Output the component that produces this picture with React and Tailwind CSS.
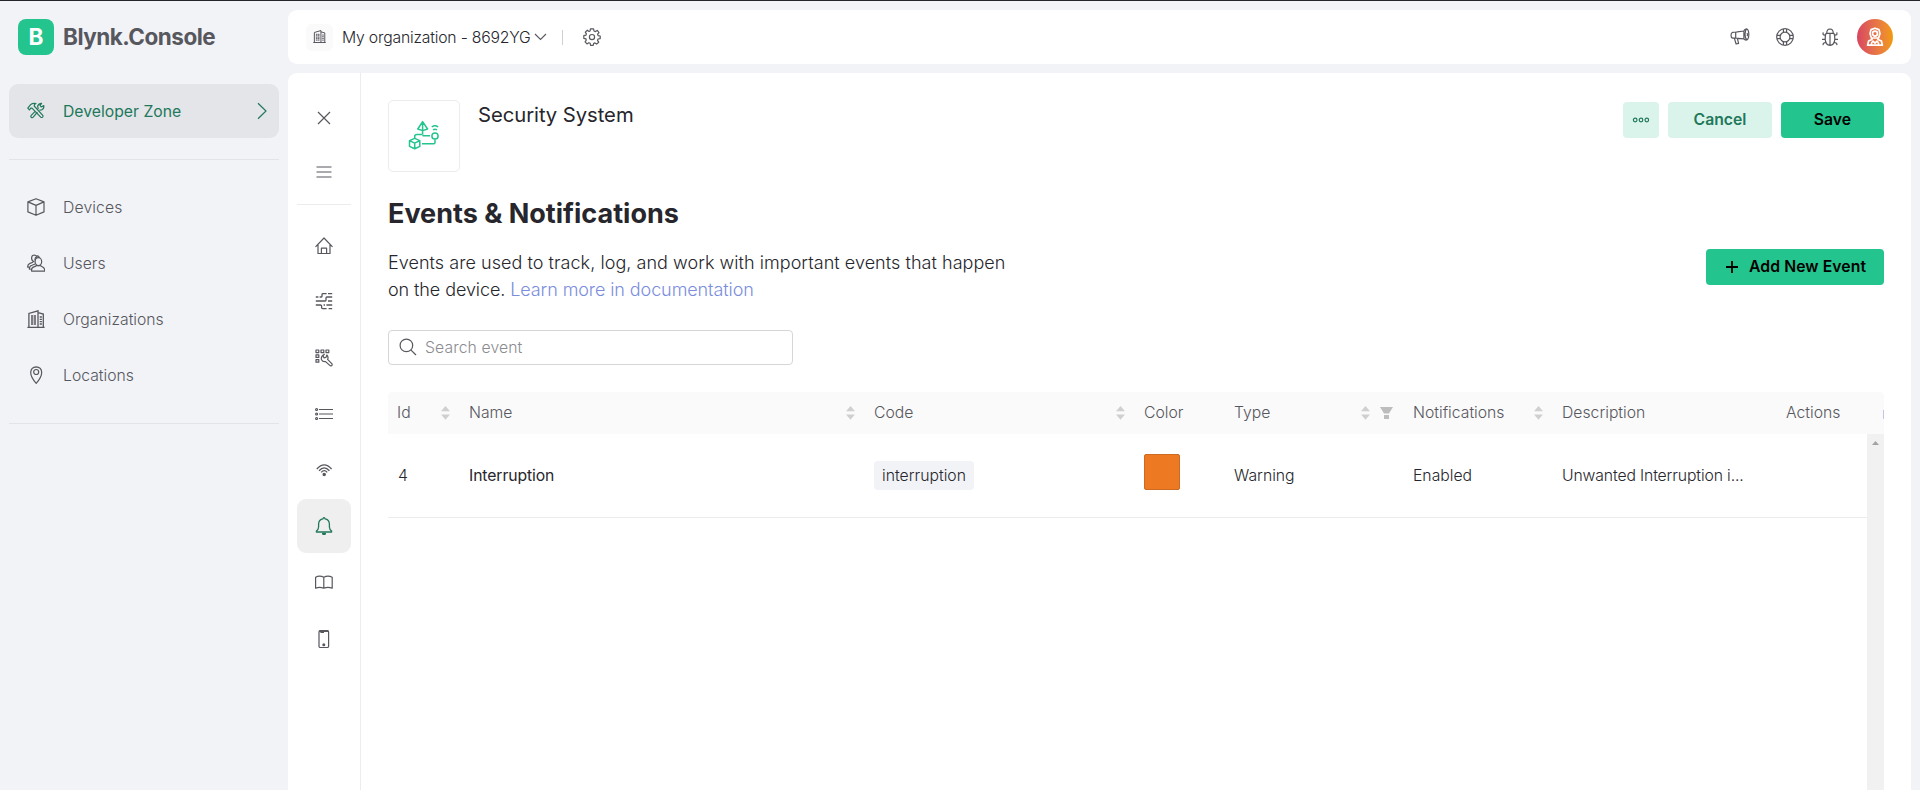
import React from "react";

function Svg({ size = 18, className = "", sw = 1.2, children }) {
  return (
    <svg
      width={size}
      height={size}
      viewBox={`0 0 ${size} ${size}`}
      fill="none"
      stroke="currentColor"
      strokeWidth={sw}
      strokeLinejoin="round"
      className={`shrink-0 ${className}`}
    >
      {children}
    </svg>
  );
}

const Tools = () => (
  <Svg>
    <path d="M.8 6.2 3.6 2.6Q5.6.9 9 1.5 7 2.3 7.2 4L15.8 13.3Q16.4 14.3 15.6 15.1 14.6 15.9 13.7 15.1L5 6.2 4 6 2.4 7.8Z" />
    <path d="M11.3 7 10.6 4.2Q11.3 1.6 14.6 1.3L13 3.4 14.2 5 16.8 3.6Q17.2 6.6 14.8 7.8L12.4 8.2M10.4 10.2 6.2 15.2Q5.2 16.2 4.2 15.3 3.3 14.3 4.2 13.4L8.2 9.4" />
  </Svg>
);
const Cube = () => (
  <Svg>
    <path d="M9 .8 17 3.9V13.9L9 17.3 .9 13.9V3.9ZM.9 3.9 9 7.4 17 3.9M9 7.4V17.3" />
  </Svg>
);
const People = () => (
  <Svg>
    <path d="M4.6 17.2Q3.9 13.4 7.6 12.6L9.5 11.6H13.2L16.4 13.6Q18 14.8 17.6 17.2Z" />
    <ellipse cx="11.4" cy="7.6" rx="3.3" ry="4" />
    <path d="M8.1 6.4Q7.4 3.6 10 2.9M9.8 2.8Q9.2 1.1 7.2 1 4.4 1.3 4.6 4.4 4.9 7.4 7.4 8M12.6 3.7Q11.4 1.4 9.6 2M3.8 15.2H2.4Q2 12.2 5 11.2L8.2 10M2 13.2H.7Q.4 10.4 3 9.4L6 8.2" />
  </Svg>
);
const Building = ({ size = 18 }) => (
  <svg width={size} height={size} viewBox="0 0 18 18" fill="none" stroke="currentColor" strokeWidth="1.3" className="shrink-0">
    <path d="M.4 17.3H17.6M1.9 17V3.4L11 .8V17M11 2.6 16.3 4V17" />
    <path d="M4 6H9.4M4 8H9.4M4 10H9.4M4 12H9.4M4 14H9.4M12.7 7H15M12.7 9.3H15M12.7 11.6H15M12.7 14H15" strokeDasharray="2.2 .6" />
  </svg>
);
const Pin = () => (
  <Svg>
    <path d="M9.2 17.3Q3.7 11 3.7 6.4 4 1 9.2.8 14.5 1 14.7 6.4 14.7 11 9.2 17.3Z" />
    <circle cx="9.2" cy="6" r="2.5" />
  </Svg>
);
const Gear = () => (
  <Svg>
    <path d="M7.4.8H10.6L11 3 12.4 3.6 14.3 2.4 16 4.6 14.6 6.2 15.1 7.6 17.2 8V10.6L15 11 14.5 12.4 15.7 14.2 13.6 16.1 11.9 14.9 10.7 15.3 10.2 17.3H7.6L7.1 15.2 5.8 14.7 4 15.9 2.1 13.8 3.3 12.1 2.9 10.8.8 10.3V7.7L2.9 7.2 3.4 5.9 2.3 4.1 4.3 2.2 6 3.4 7.1 3Z" />
    <circle cx="9" cy="9.1" r="2.6" />
  </Svg>
);
const Megaphone = () => (
  <Svg size={20}>
    <path d="M7.2 4.9 13.9 4V12L7.2 11.3M5.7 5 2.6 5.4Q1 5.8 1 8.3T2.6 11.2H5.7ZM5.7 5.1 13.8 4Q14.6 2 16.6 1.9 18.8 2.6 18.8 7.3T16.8 13Q14.6 13.2 13.8 11.8L5.7 11.2M16.4 2Q15 4 15 7.5T16.8 13M4.4 11.4 6.1 17 8.6 16.4 7.4 11.6" />
    <path d="M17 6Q18.2 7.6 17 9.2" />
  </Svg>
);
const Buoy = () => (
  <Svg>
    <circle cx="9" cy="9" r="8.3" />
    <circle cx="9" cy="9" r="4.9" />
    <path d="M7.4.9V4.3M10.6.9V4.3M7.4 13.7V17.1M10.6 13.7V17.1M.9 7.4H4.3M.9 10.6H4.3M13.7 7.4H17.1M13.7 10.6H17.1" />
  </Svg>
);
const Bug = () => (
  <Svg>
    <path d="M5.8 5Q5.7 1.1 9 1 12.3 1.1 12.2 5M5 5.4H13Q13.8 7 13.8 11.4 13.4 17 9 17.3 4.6 17 4.2 11.4 4.2 7 5 5.4ZM9 5.4V17M4.6 7.4 2.2 6.6 2 4.4M13.4 7.4 15.8 6.6 16 4.4M4.2 11.3H1M13.8 11.3H17M4.8 14.4 2.4 15.2 2 17.2M13.2 14.4 15.6 15.2 16 17.2" />
  </Svg>
);
const Avatar = () => (
  <Svg size={20} className="text-white" sw={1.7}>
    <path d="M6 2.6 10 1.2 14 2.6 15 6.6 13.6 11H6.4L5 6.6Z" />
    <circle cx="10" cy="6.6" r="2.5" />
    <path d="M7 11V12.4L3.6 14 2.6 18.2H17.4L16.4 14 13 12.4V11M6.2 18Q6.4 15 8 14.2L10 16.2 12 14.2Q13.6 15 13.8 18" />
  </Svg>
);
const Template = () => (
  <svg width="32" height="32" viewBox="0 0 32 32" fill="none" stroke="#24c48e" strokeWidth="1.5" strokeLinejoin="round">
    <path d="M14.6 1.6 9.8 9 14.6 10.6 19.6 9ZM14.6 1.6V14.5M6.7 18V16.4Q6.7 14.4 9 14.4H14M15 14.8V15.7H22M14 23.7H25.8Q27 23.7 27 22.4V19.6" />
    <circle cx="27" cy="16" r="3.1" />
    <path d="M25 9.8Q27 8.8 29 9.8M23.8 7Q27 4.4 30.2 7" />
    <path d="M6.7 18.4 11.8 20.6V26.4L6.7 28.7 1.5 26.4V20.6ZM1.5 20.6 6.7 23.2 11.8 20.6M6.7 23.2V28.7" />
  </svg>
);
const Home = () => (
  <Svg>
    <path d="M.5 9.8 9 1 17.5 9.8M3 7.6V16.5H15V7.6M6.4 16.5V11.2H11.6V16.5" />
  </Svg>
);
const Streams = () => (
  <Svg sw={1.3} className="-mt-[2px]">
    <path d="M.8 5H3.4M4.6 5H6.4Q7 5 7 4.2V2.4Q7 1.6 8 1.6H11.6M13 1.6H17.2M.8 9H10.2Q11 9 11 8V6Q11 5 12 5H17.2M13 9H17.2M.8 13H5.4Q6.6 13 6.6 14V15.8Q6.6 16.6 7.6 16.6H11.6M8.6 13H10M11.4 13H17.2M13.6 16.6H17.2" />
  </Svg>
);
const Keys = () => (
  <Svg>
    <rect x="1" y="1" width="2.8" height="2.6" />
    <rect x="6" y="1" width="2.8" height="2.6" />
    <rect x="11" y="1" width="2.8" height="2.6" />
    <rect x="1" y="5.8" width="2.8" height="2.6" />
    <rect x="1" y="10.6" width="2.8" height="2.6" />
    <path d="M9.4 5.2 8 6.8 9 8.8 11 8.4 11.8 6Q13.8 8.2 12.6 10.4L17 14.8Q17.4 16 16.6 16.8 15.4 17.2 14.8 16.4L10.6 12.6Q7.6 13 6.4 10.4 5.8 7 9.4 5.2Z" />
  </Svg>
);
const List = () => (
  <Svg>
    <path d="M4 4.5H18M4 9H18M4 13.5H18" />
    <circle cx="1.6" cy="4.5" r="1" />
    <circle cx="1.6" cy="9" r="1" />
    <circle cx="1.6" cy="13.5" r="1" />
  </Svg>
);
const Wifi = () => (
  <Svg sw={1.3}>
    <path d="M1.8 8Q9.2-.4 16.6 8M4 9.8Q9.2 3.8 14.4 9.8M6.2 11.4Q9.2 8 12.2 11.4" />
    <circle cx="9.2" cy="13.4" r="1.1" fill="currentColor" />
  </Svg>
);
const Bell = () => (
  <Svg sw={1.3}>
    <path d="M1.4 15V14Q3.5 12.6 3.6 10V7Q3.8 2.4 8 1.8 8.2.8 9 .7T10 1.8Q14.2 2.4 14.4 7V10Q14.5 12.6 16.6 14V15Z" />
    <path d="M7.6 16.4Q7.8 17.6 9 17.6T10.4 16.4Z" fill="currentColor" />
  </Svg>
);
const Book = () => (
  <Svg>
    <path d="M.6 4.2Q4.6 2 8.8 4.2 13 2 17.2 4.2V15.2Q13 13.6 8.8 15.2 4.6 13.6.6 15.2ZM8.8 4.2V15.2" />
  </Svg>
);
const Phone = () => (
  <Svg className="mt-[2px]">
    <rect x="4" y=".7" width="9.6" height="16.8" rx="1.2" />
    <path d="M5.4 2.5H9M4 1.4H13.6" />
    <circle cx="8.8" cy="14.8" r=".9" fill="currentColor" />
  </Svg>
);

function Sorter() {
  return (
    <svg width="9" height="14" viewBox="0 0 9 14" fill="#d0d0d0" className="shrink-0">
      <path d="M0 5.2 4.5 0 9 5.2ZM0 8.6H9L4.5 13.8Z" />
    </svg>
  );
}

const NAV = [
  [Cube, "Devices", "pt-[2px] tracking-[0.12px]"],
  [People, "Users", "pt-[2px]"],
  [Building, "Organizations", "pt-[2px]"],
  [Pin, "Locations", "pt-[2px]"],
];

function Sidebar() {
  return (
    <aside className="flex w-[288px] shrink-0 flex-col pr-[9px] pl-[9px]">
      <div className="mt-[18px] flex h-[36px] items-center gap-[9px] pl-[9px]">
        <div className="flex size-[36px] items-center justify-center rounded-[8px] bg-[#24c48e] text-[22.5px] font-bold text-white">B</div>
        <div className="text-[22.5px] font-bold tracking-[-0.5px] text-[#57575e]">Blynk.Console</div>
      </div>
      <div className="mt-[29px] flex h-[54px] items-center rounded-[9px] bg-[#e4e5e9] pr-[12px] pl-[18px] text-[#21785a]">
        <Tools />
        <span className="ml-[18px] flex-1 pt-[2px] font-normal">Developer Zone</span>
        <svg width="10" height="18" viewBox="0 0 10 18" fill="none" stroke="currentColor" strokeWidth="1.2">
          <path d="M1 1.2 9 9 1 16.8" />
        </svg>
      </div>
      <div className="mt-[21px] h-px bg-[#e3e4e8]" />
      <nav className="mt-[20px] flex flex-col gap-[2px] text-[#57575e]">
        {NAV.map(([Icon, label, style]) => (
          <div key={label} className="flex h-[54px] items-center gap-[18px] pl-[18px]">
            <Icon />
            <span className={style}>{label}</span>
          </div>
        ))}
      </nav>
      <div className="mt-[21px] h-px bg-[#e3e4e8]" />
    </aside>
  );
}

function TopBar() {
  return (
    <header className="flex h-[54px] shrink-0 items-center rounded-[9px] bg-white pr-[18px] pl-[18px]">
      <div className="flex size-[27px] items-center justify-center rounded-[6px] bg-[#fafafa] pb-[2px] text-[#4c4c54]">
        <Building size={13} />
      </div>
      <span className="ml-[9px] w-[189px] pt-px tracking-[-0.2px] whitespace-nowrap text-[#26262c]">My organization - 8692YG</span>
      <svg width="13" height="8" viewBox="0 0 13 8" fill="none" stroke="#57575e" strokeWidth="1.1" className="ml-[3px]">
        <path d="M1 1 6.5 6.4 12 1" />
      </svg>
      <div className="ml-[15px] h-[15px] w-px bg-[#cfcfd4]" />
      <div className="ml-[20px] flex-1 text-[#57575e]">
        <Gear />
      </div>
      <div className="flex items-center text-[#57575e]">
        <Megaphone />
        <div className="ml-[26px]"><Buoy /></div>
        <div className="ml-[27px]"><Bug /></div>
        <div className="ml-[18px] flex size-[36px] items-center justify-center rounded-full bg-linear-to-r from-[#d8455f] to-[#f29a00]">
          <Avatar />
        </div>
      </div>
    </header>
  );
}

const RAIL = [Home, Streams, Keys, List, Wifi, Bell, Book, Phone];

function Rail() {
  return (
    <div className="flex w-[73px] shrink-0 flex-col items-center border-r border-[#ececee] pt-[18px] text-[#57575e]">
      <div className="flex h-[54px] items-center">
        <Svg><path d="M3 3 15 15M15 3 3 15" /></Svg>
      </div>
      <div className="flex h-[54px] items-center">
        <Svg><path d="M1.5 4H16.5M1.5 9H16.5M1.5 14H16.5" /></Svg>
      </div>
      <div className="mt-[5px] h-px w-[54px] bg-[#ececee]" />
      <div className="mt-[14px] flex flex-col gap-[2px]">
        {RAIL.map((Icon, i) => (
          <div
            key={i}
            className={
              i === 5
                ? "flex size-[54px] items-center justify-center rounded-[9px] bg-[#efefef] text-[#21785a]"
                : "flex size-[54px] items-center justify-center"
            }
          >
            <Icon />
          </div>
        ))}
      </div>
    </div>
  );
}

function EventsTable() {
  return (
    <div className="mt-[27px] flex min-h-0 flex-1 flex-col">
      <div className="grid h-[42px] shrink-0 grid-cols-[72px_405px_270px_90px_179px_149px_224px_107px] items-center overflow-hidden rounded-t-[4px] bg-[#fafafa] text-[#57575e] *:flex *:items-center *:pl-[9px]">
        <div className="justify-between pr-[10px]">Id<Sorter /></div>
        <div className="justify-between pr-[10px]">Name<Sorter /></div>
        <div className="justify-between pr-[10px]">Code<Sorter /></div>
        <div>Color</div>
        <div className="pr-[11px]">
          <span className="flex-1">Type</span>
          <Sorter />
          <svg width="13" height="12" viewBox="0 0 13 12" fill="#bdbdbd" className="ml-[10px]">
            <path d="M0 0H13L9 6.4H4ZM4 8H9V12H4Z" />
          </svg>
        </div>
        <div className="justify-between pr-[10px]">Notifications<Sorter /></div>
        <div>Description</div>
        <div className="justify-between">
          Actions<span className="mt-[3px] h-[9px] w-px bg-[#c5c3e6]" />
        </div>
      </div>
      <div className="flex min-h-0 flex-1">
        <div className="flex-1">
          <div className="grid h-[84px] grid-cols-[72px_405px_270px_90px_179px_149px_224px_90px] items-center border-b border-[#ececee] text-[#26262c] *:pl-[9px]">
            <div><span className="ml-px">4</span></div>
            <div className="font-normal tracking-[-0.1px]">Interruption</div>
            <div className="flex">
              <span className="flex h-[29px] w-[100px] items-center justify-center rounded-[4px] bg-[#f2f3f7]">interruption</span>
            </div>
            <div>
              <div className="-mt-[7px] size-[36px] rounded-[2px] border border-[#cb6a20] bg-[#ed7a22]" />
            </div>
            <div>Warning</div>
            <div>Enabled</div>
            <div className="tracking-[-0.13px]">Unwanted Interruption i...</div>
            <div />
          </div>
        </div>
        <div className="flex w-[17px] justify-center bg-[#f1f1f1] pt-[7px]">
          <svg width="7" height="4" viewBox="0 0 7 4" fill="#a3a3a3">
            <path d="M0 4 3.5 0 7 4Z" />
          </svg>
        </div>
      </div>
    </div>
  );
}

function Content() {
  return (
    <section className="flex min-w-0 flex-1 flex-col pr-[27px] pl-[27px]">
      <div className="mt-[27px] flex h-[72px] items-start">
        <div className="flex size-[72px] items-center justify-center rounded-[5px] border border-[#ececee]">
          <Template />
        </div>
        <h2 className="ml-[18px] flex-1 text-[20.25px] leading-[30px] font-normal tracking-[-0.05px] text-[#26262c]">Security System</h2>
        <div className="mt-[2px] flex gap-[9px] font-semibold">
          <button className="flex size-[36px] items-center justify-center rounded-[4px] bg-[#dbf4eb] text-[#21785a]">
            <svg width="18" height="6" viewBox="0 0 18 6" fill="none" stroke="currentColor" strokeWidth="1.2">
              <circle cx="3.2" cy="3" r="1.8" />
              <circle cx="9" cy="3" r="1.8" />
              <circle cx="14.8" cy="3" r="1.8" />
            </svg>
          </button>
          <button className="h-[36px] w-[104px] rounded-[4px] bg-[#dbf4eb] text-[#21785a]">Cancel</button>
          <button className="h-[36px] w-[103px] rounded-[4px] bg-[#24c48e] text-black">Save</button>
        </div>
      </div>
      <h1 className="mt-[25px] text-[27px] leading-[34px] font-bold text-[#26262c]">Events &amp; Notifications</h1>
      <div className="mt-[18px] flex items-start justify-between">
        <p className="text-[18px] leading-[27px] tracking-[0.05px] whitespace-nowrap text-[#26262c]">
          Events are used to track, log, and work with important events that happen
          <br />
          <span className="tracking-[-0.09px]">
            on the device. <a className="text-[#7b8ddd]">Learn more in documentation</a>
          </span>
        </p>
        <button className="flex h-[36px] w-[178px] items-center rounded-[4px] bg-[#24c48e] pl-[19px] font-semibold text-black">
          <svg width="14" height="14" viewBox="0 0 14 14" stroke="currentColor" strokeWidth="1.8">
            <path d="M1 7H13M7 1V13" />
          </svg>
          <span className="ml-[10px] tracking-[0.08px] whitespace-nowrap">Add New Event</span>
        </button>
      </div>
      <div className="mt-[27px] flex h-[35px] w-[405px] shrink-0 items-center rounded-[4px] border border-[#d6d6d9] pl-[10px] text-[#8b8b91]">
        <Svg className="-mt-px text-[#57575e]"><circle cx="7.4" cy="7.4" r="6.3" /><path d="M11.8 11.8 17 17" /></Svg>
        <span className="ml-[8px] tracking-[0.1px]">Search event</span>
      </div>
      <EventsTable />
    </section>
  );
}

export default function App() {
  return (
    <div className="h-[790px] w-[1920px] overflow-hidden border-t border-[#24242e] bg-[#f2f3f7] font-['Inter',sans-serif] text-[15.75px] leading-[24px] font-light">
      <div className="flex h-full">
        <Sidebar />
        <div className="flex min-w-0 flex-1 flex-col pt-[9px] pr-[9px]">
          <TopBar />
          <main className="mt-[9px] flex min-h-0 flex-1 rounded-t-[9px] bg-white">
            <Rail />
            <Content />
          </main>
        </div>
      </div>
    </div>
  );
}
